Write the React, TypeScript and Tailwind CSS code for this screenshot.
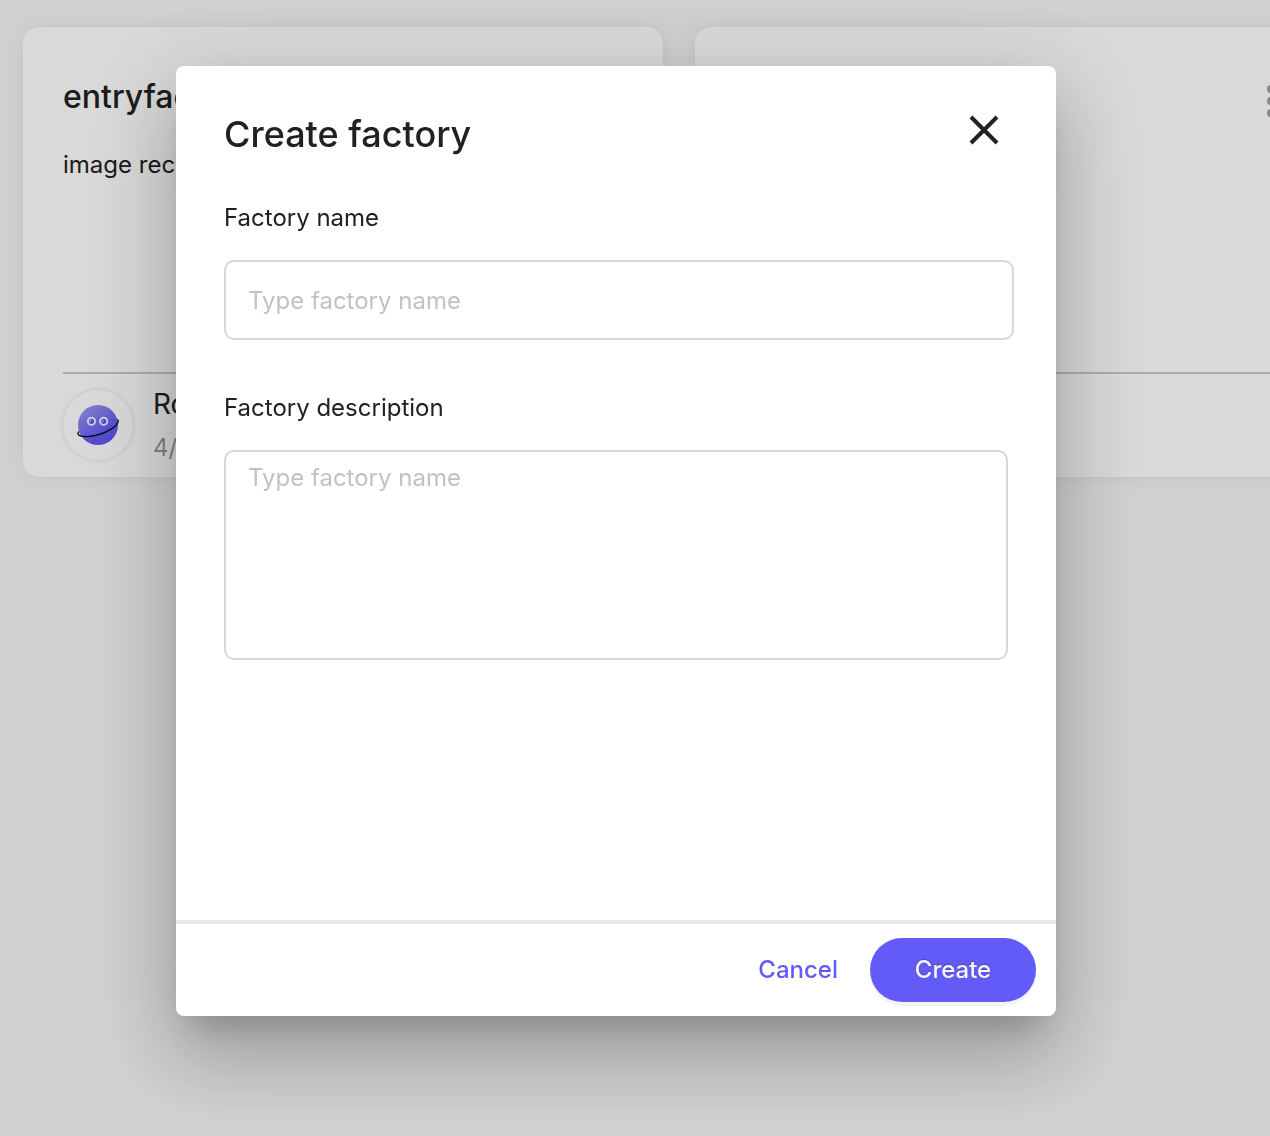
import React from "react";

function PlanetAvatar() {
  return (
    <div className="flex size-[70px] shrink-0 items-center justify-center rounded-full bg-white shadow-[0_0_5px_rgba(0,0,0,0.13)]">
      <svg viewBox="0 0 44 44" className="size-11" aria-hidden="true">
        <defs>
          <linearGradient id="planet" x1="0.15" y1="0.1" x2="0.6" y2="0.75">
            <stop offset="0" stopColor="#9a94f2" />
            <stop offset="1" stopColor="#6159f4" />
          </linearGradient>
        </defs>
        <circle cx="22" cy="22" r="20" fill="url(#planet)" />
        <circle cx="15.5" cy="18.3" r="3.6" fill="#5f56e8" stroke="#f4f3ff" strokeWidth="1.9" />
        <circle cx="27.7" cy="18.3" r="3.6" fill="#5f56e8" stroke="#f4f3ff" strokeWidth="1.9" />
        <circle cx="14.5" cy="18" r="0.8" fill="#f4f3ff" />
        <circle cx="26.7" cy="18" r="0.8" fill="#f4f3ff" />
        <path
          d="M2.6 29C0.5 31.5 3.5 33.9 11 33.6C22 33.2 39 26.5 42 19.6C42.6 18.2 42.3 17.2 41.6 16.8"
          fill="none"
          stroke="#0b0b18"
          strokeWidth="1.3"
          strokeLinecap="round"
        />
      </svg>
    </div>
  );
}

type FactoryCardProps = {
  title?: string;
  description?: string;
  owner?: string;
  date?: string;
};

function FactoryCard({ title, description, owner, date }: FactoryCardProps) {
  return (
    <article className="flex h-[450px] w-[640px] shrink-0 flex-col rounded-2xl bg-white px-10 shadow-[0_0_20px_rgba(60,70,90,0.09)]">
      <header className="flex items-start justify-between pt-12">
        <h2 className="text-[32px] leading-11 font-medium">{title}</h2>
        <button type="button" aria-label="Factory options" className="mt-2.5 mr-5">
          <svg viewBox="0 0 8 32" className="h-8 w-2" fill="#a0a0a0">
            <circle cx="4" cy="4" r="4" />
            <circle cx="4" cy="16" r="4" />
            <circle cx="4" cy="28" r="4" />
          </svg>
        </button>
      </header>
      <p className="mt-7 text-2xl leading-9">{description}</p>
      <footer className="mt-auto flex h-[105px] gap-5 border-t-2 border-[#cbcbcb] pt-4">
        {owner && (
          <>
            <PlanetAvatar />
            <div className="-mt-2">
              <p className="text-[28px] leading-11">{owner}</p>
              <p className="text-2xl leading-11 text-[#9a9a9a]">{date}</p>
            </div>
          </>
        )}
      </footer>
    </article>
  );
}

function CreateFactoryDialog() {
  return (
    <div
      role="dialog"
      aria-modal="true"
      aria-labelledby="dialog-title"
      className="flex min-h-[950px] w-full max-w-[880px] flex-col rounded-lg bg-white shadow-[0_22px_30px_-14px_rgba(0,0,0,0.2),0_48px_76px_6px_rgba(0,0,0,0.14),0_18px_92px_16px_rgba(0,0,0,0.12)]"
    >
      <header className="flex items-start justify-between pt-11 pr-14 pl-12">
        <h1 id="dialog-title" className="text-4xl leading-12 font-medium">
          Create factory
        </h1>
        <button type="button" aria-label="Close">
          <svg viewBox="0 0 32 40" className="h-10 w-8" stroke="#212121" strokeWidth="4" fill="none">
            <path d="M3 7L29 33M29 7L3 33" />
          </svg>
        </button>
      </header>
      <form id="factory-form" className="flex flex-1 flex-col px-12 pt-[42px]">
        <label htmlFor="factory-name" className="text-2xl leading-9">
          Factory name
        </label>
        <input
          id="factory-name"
          type="text"
          placeholder="Type factory name"
          className="-mr-1.5 mt-6 h-20 rounded-[10px] border-2 border-[#d7d7d7] px-[22px] text-2xl outline-none placeholder:text-[#c2c2c2]"
        />
        <label htmlFor="factory-description" className="mt-[50px] text-2xl leading-9">
          Factory description
        </label>
        <textarea
          id="factory-description"
          placeholder="Type factory name"
          className="mt-6 h-[210px] resize-none rounded-[10px] border-2 border-[#d7d7d7] px-[22px] py-2 text-2xl leading-9 outline-none placeholder:text-[#c2c2c2]"
        />
      </form>
      <footer className="flex items-center justify-end gap-8 border-t-4 border-[#e8e8e8] py-3.5 pr-5">
        <button type="button" className="text-2xl font-medium text-[#635bf7]">
          Cancel
        </button>
        <button
          type="submit"
          form="factory-form"
          className="h-16 w-[166px] rounded-full bg-[#635bf7] text-2xl font-medium text-[#f5f5f5] shadow-[0_4px_0_#f4f4f4] text-shadow-[0_-1px_1px_rgba(0,0,0,0.25)]"
        >
          Create
        </button>
      </footer>
    </div>
  );
}

export default function App() {
  return (
    <div className="min-h-screen overflow-hidden bg-[#f5f6f8] font-['Inter',sans-serif] text-[#212121]">
      <main className="flex gap-8 pt-[27px] pl-[23px]">
        <FactoryCard
          title="entryfactory"
          description="image recognition"
          owner="Robot"
          date="4/12/2022"
        />
        <FactoryCard />
      </main>
      <div className="fixed inset-0 flex items-start justify-center overflow-hidden bg-black/15 pt-[66px] pr-[38px]">
        <CreateFactoryDialog />
      </div>
    </div>
  );
}
